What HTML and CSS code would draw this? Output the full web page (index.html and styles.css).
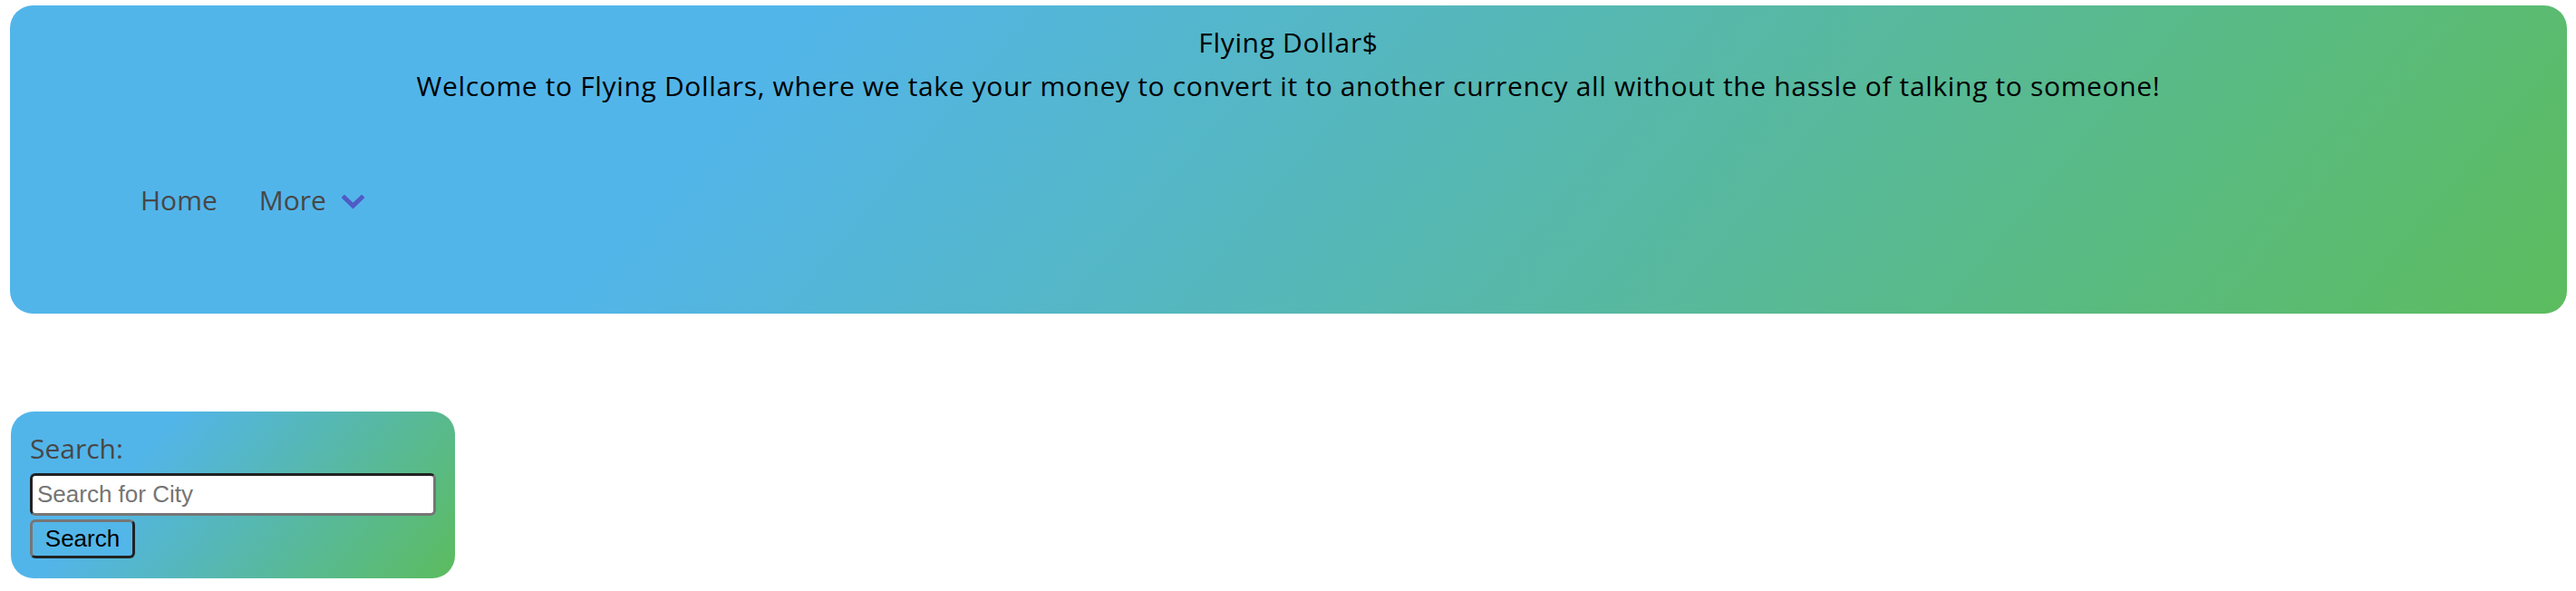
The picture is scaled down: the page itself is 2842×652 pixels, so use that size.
FILE: index.html
```html
<!DOCTYPE html>
<html lang="en">
<head>
<meta charset="utf-8">
<title>Flying Dollar$</title>
<link rel="stylesheet" href="styles.css">
</head>
<body>
  <header class="banner grad">
    <div class="titles">
      <div class="title">Flying Dollar$</div>
      <div class="tagline">Welcome to Flying Dollars, where we take your money to convert it to another currency all without the hassle of talking to someone!</div>
    </div>
    <nav class="nav">
      <a class="nav-link" href="#">Home</a>
      <span class="nav-link more">More
        <svg class="chev" width="25" height="16" viewBox="0 0 25 16" aria-hidden="true">
          <path d="M3 3 L12.5 12 L22 3" fill="none" stroke="#4f5bc6" stroke-width="5" stroke-linecap="square" stroke-linejoin="miter"/>
        </svg>
      </span>
    </nav>
  </header>

  <section class="search grad">
    <label class="search-label" for="city">Search:</label>
    <input class="search-input" id="city" type="text" placeholder="Search for City">
    <button class="search-btn" type="button">Search</button>
  </section>
</body>
</html>
```

FILE: styles.css
```css
html, body {
  margin: 0;
  background: #ffffff;
}

body {
  padding: 6px 10px 0 11px;
  font-family: "Open Sans", "DejaVu Sans", sans-serif;
}

.grad {
  background: linear-gradient(130deg, #52b5ea 28%, #5cbc5e 100%);
}

.banner {
  border-radius: 25px;
  padding: 17px 0 101px;
}

.titles {
  text-align: center;
  color: #000;
  font-size: 30px;
  line-height: 48px;
  letter-spacing: 0.65px;
}

.nav {
  margin-top: 78px;
  padding-left: 144px;
  display: flex;
  align-items: center;
  gap: 46px;
  font-size: 30px;
  line-height: 48px;
}

.nav-link {
  color: #474747;
  text-decoration: none;
}

.more {
  display: flex;
  align-items: center;
  gap: 17px;
}

.chev {
  display: block;
  margin-top: 4px;
}

.search {
  margin-top: 108px;
  margin-left: 1px;
  width: 490px;
  box-sizing: border-box;
  border-radius: 25px;
  padding: 17px 21px 22px;
  display: flex;
  flex-direction: column;
  align-items: flex-start;
}

.search-label {
  display: block;
  color: #474747;
  font-size: 30px;
  line-height: 48px;
}

.search-input {
  margin-top: 3px;
  width: 448px;
  height: 47px;
  box-sizing: border-box;
  border: 3px solid;
  border-color: #222 #767676 #767676 #222;
  border-radius: 6px;
  padding: 0 5px;
  font-family: "Liberation Sans", Arial, sans-serif;
  font-size: 26px;
  background: #fff;
  color: #000;
}

.search-input::placeholder {
  color: #757575;
}

.search-btn {
  margin-top: 4px;
  width: 116px;
  height: 43px;
  box-sizing: border-box;
  border: 3px solid;
  border-color: #767676 #222 #222 #767676;
  border-radius: 6px;
  padding: 0;
  background: #53b6e9;
  color: #000;
  font-family: "Liberation Sans", Arial, sans-serif;
  font-size: 26px;
}
```
